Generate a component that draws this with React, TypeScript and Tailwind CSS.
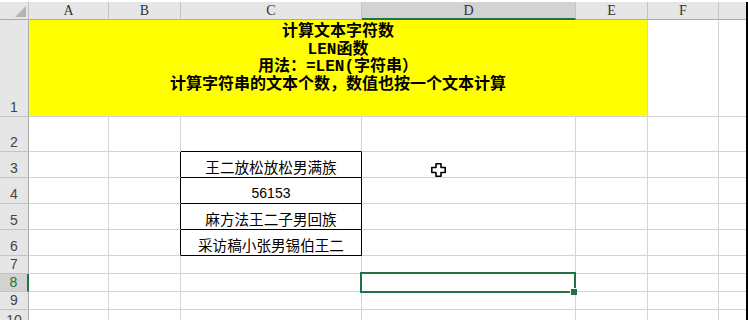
import React from "react";

const COLS = ["A", "B", "C", "D", "E", "F", ""];
const COL_W = [80, 72, 181, 214, 72, 71, 27];
const ROW_H = [97, 35, 26, 26, 26, 26, 18, 18, 18, 20];

const HDR = "bg-[#e6e6e6] text-[#444]";
const GRID = "border-[#d4d4d4]";

const data: Record<number, string> = {
  3: "王二放松放松男满族",
  4: "56153",
  5: "麻方法王二子男回族",
  6: "采访稿小张男锡伯王二",
};

function Cursor() {
  return (
    <svg width="15" height="14" viewBox="0 0 15 14" className="absolute left-[431px] top-[163px]">
      <polygon
        points="5,0.8 10,0.8 10,4.5 14.2,4.5 14.2,9.5 10,9.5 10,13.2 5,13.2 5,9.5 0.8,9.5 0.8,4.5 5,4.5"
        fill="#fff"
        stroke="#000"
        strokeWidth="1.6"
        strokeLinejoin="round"
      />
    </svg>
  );
}

export default function App() {
  const cols = `29px ${COL_W.map((w) => w + "px").join(" ")} 2px`;
  const rows = `18px ${ROW_H.map((h) => h + "px").join(" ")}`;
  const cells: React.ReactNode[] = [];

  cells.push(
    <div key="corner" className={`${HDR} relative border-r border-b border-r-[#c4c4c4] border-b-[#ababab]`}>
      <svg width="12" height="12" viewBox="0 0 12 12" className="absolute left-[15px] top-[4px]">
        <polygon points="11,0 11,11 0,11" fill="#b4b4b4" />
      </svg>
    </div>
  );
  COLS.forEach((c, i) => {
    const sel = c === "D";
    cells.push(
      <div
        key={"h" + i}
        className={`${sel ? "bg-[#d2d2d2] border-b-2 border-b-[#217346]" : "bg-[#e6e6e6] border-b border-b-[#ababab]"} ${
          i < 6 ? "border-r border-r-[#c4c4c4]" : ""
        } flex items-center justify-center text-[#333] text-[14px] leading-[16px] pt-[1px]`}
        style={{ fontFamily: '"Liberation Serif", serif' }}
      >
        {c}
      </div>
    );
  });
  cells.push(<div key="hblk" className="bg-black row-span-11" />);

  for (let r = 1; r <= 10; r++) {
    const selRow = r === 8;
    cells.push(
      <div
        key={"rh" + r}
        className={`${selRow ? "bg-[#d2d2d2] text-[#217346] border-r-2 border-r-[#217346]" : "bg-[#e6e6e6] text-[#444] border-r border-r-[#ababab]"} border-b border-b-[#c4c4c4] flex items-end justify-center text-[14px] leading-[17px] overflow-hidden`}
        style={{ fontFamily: '"Liberation Sans", sans-serif' }}
      >
        {r}
      </div>
    );
    if (r === 1) {
      cells.push(
        <div
          key="title"
          className="col-span-5 bg-[#ffff00] border-b border-[#d4d4d4] border-r flex flex-col items-center pt-[4px] text-[16px] leading-[17.5px] font-bold text-black"
          style={{ fontFamily: '"Liberation Mono", "Noto Sans CJK SC", monospace' }}
        >
          <div>计算文本字符数</div>
          <div>LEN函数</div>
          <div>用法：=LEN(字符串）</div>
          <div>计算字符串的文本个数，数值也按一个文本计算</div>
        </div>
      );
      cells.push(<div key="f1" className={`border-r border-b ${GRID}`} />);
      cells.push(<div key="g1" className={`border-b ${GRID}`} />);
      continue;
    }
    for (let c = 0; c < 7; c++) {
      const inTable = r >= 3 && r <= 6;
      let cls = `border-b ${c < 6 ? "border-r" : ""} ${GRID}`;
      let content: React.ReactNode = null;
      if (c === 1 && inTable) {
        cls = `border-b border-r border-b-[#d4d4d4] border-r-black`;
      }
      if (c === 2) {
        if (r === 2) cls = `border-b border-r border-b-black border-r-[#d4d4d4]`;
        if (inTable) {
          cls = `border-b border-r border-black flex items-end justify-center pb-[1px] ${
            r === 4 ? "text-[14px]" : "text-[14.6px]"
          } leading-[18px] text-black`;
          content = data[r];
        }
      }
      cells.push(
        <div
          key={`c${r}-${c}`}
          className={cls}
          style={{ fontFamily: r === 4 ? '"Liberation Sans", sans-serif' : '"Noto Sans CJK SC", sans-serif' }}
        >
          {content}
        </div>
      );
    }
  }

  return (
    <div className="w-[748px] h-[320px] overflow-hidden bg-white pt-[2px] relative">
      <div className="grid" style={{ gridTemplateColumns: cols, gridTemplateRows: rows }}>
        {cells}
      </div>
      <div className="absolute left-[360px] top-[272px] w-[216px] h-[21px] border-2 border-[#217346]" />
      <div className="absolute left-[570px] top-[288px] w-[7px] h-[7px] bg-[#217346] border border-white border-r-0 border-b-0" />
      <Cursor />
    </div>
  );
}
